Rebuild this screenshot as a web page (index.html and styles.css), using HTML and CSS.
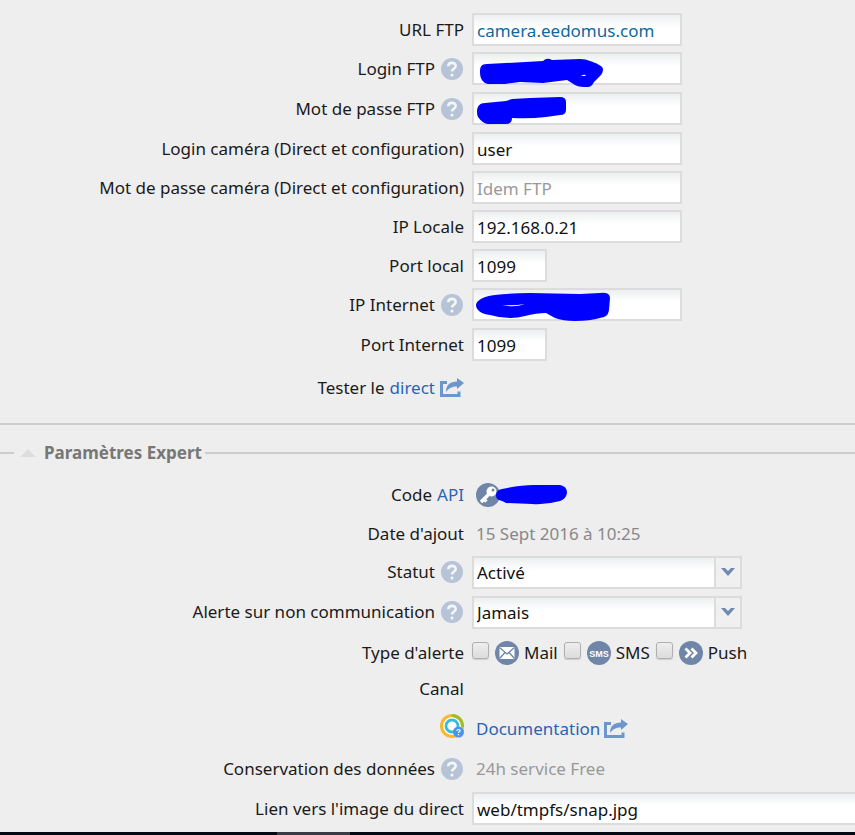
FILE: index.html
```html
<!DOCTYPE html>
<html lang="fr">
<head>
  <meta charset="UTF-8">
  <meta name="viewport" content="width=device-width, initial-scale=1.0">
  <title>Configuration caméra</title>
  <link rel="stylesheet" href="styles.css">
</head>
<body>
  <!-- Icônes partagées -->
  <svg class="sprite" aria-hidden="true">
    <symbol id="icon-help" viewBox="0 0 24 24">
      <circle cx="12" cy="12" r="11" fill="#b7c3d6"/>
      <path d="M8.300 9.300C8.300 4.800 15.700 4.800 15.700 9C15.700 11.800 12 11.700 12 14.500" fill="none" stroke="#f4f6f9" stroke-width="2.600"/>
      <circle cx="12" cy="18" r="1.600" fill="#f4f6f9"/>
    </symbol>
    <symbol id="icon-share" viewBox="0 0 24 20">
      <path d="M7 4.500H1.500V17.500H19V13.500" fill="none" stroke="#6d97cb" stroke-width="3"/>
      <path d="M6 14C6 7 10 3.500 17 3.500V0L24 5L17 11V8.500C12 8.500 9 10 6 14Z" fill="#6d97cb"/>
    </symbol>
    <symbol id="icon-arrow" viewBox="0 0 14 8">
      <path d="M0 0H4L7 3L10 0H14L7 8Z" fill="#6f89ae"/>
    </symbol>
  </svg>

  <form class="page">
    <section class="reseau">
      <div class="row">
        <label for="urlFtp">URL FTP</label>
        <div class="value"><input class="champ url" type="text" id="urlFtp" value="camera.eedomus.com"></div>
      </div>
      <div class="row aide">
        <label for="loginFtp">Login FTP <svg class="help"><use href="#icon-help"/></svg></label>
        <div class="value">
          <input class="champ" type="text" id="loginFtp">
          <svg class="masque" width="140" height="40" viewBox="0 0 140 40">
            <path d="M8 20C8 15 9 12 15 12L71 9Q75 5 80 8L108 7Q114 7 118 9C124 11 131 14 131 17C131 20 130 22 128 24L122 30C120 34 118 35 116 35C111 35 107 35 103 33L95 28L71 31L48 30L33 32H16C11 31 8 27 8 20Z" fill="#0000ff"/>
            <path d="M109 24Q112 22 114 23L113 24Z" fill="#fff"/>
          </svg>
        </div>
      </div>
      <div class="row aide">
        <label for="passeFtp">Mot de passe FTP <svg class="help"><use href="#icon-help"/></svg></label>
        <div class="value">
          <input class="champ" type="password" id="passeFtp">
          <svg class="masque" width="140" height="40" viewBox="0 0 140 40">
            <path d="M5 20C5 14 8 11 13 11L34 9L40 7L58 6L88 5Q94 5 94 10V18Q94 23 88 23L74 25Q58 27 40 26Q40 32 34 32H16Q11 32 6 25Q5 23 5 20Z" fill="#0000ff"/>
          </svg>
        </div>
      </div>
      <div class="row">
        <label for="loginCam">Login caméra (Direct et configuration)</label>
        <div class="value"><input class="champ" type="text" id="loginCam" value="user"></div>
      </div>
      <div class="row">
        <label for="passeCam">Mot de passe caméra (Direct et configuration)</label>
        <div class="value"><input class="champ" type="text" id="passeCam" placeholder="Idem FTP"></div>
      </div>
      <div class="row">
        <label for="ipLocale">IP Locale</label>
        <div class="value"><input class="champ" type="text" id="ipLocale" value="192.168.0.21"></div>
      </div>
      <div class="row">
        <label for="portLocal">Port local</label>
        <div class="value"><input class="champ port" type="text" id="portLocal" value="1099"></div>
      </div>
      <div class="row aide">
        <label for="ipInternet">IP Internet <svg class="help"><use href="#icon-help"/></svg></label>
        <div class="value">
          <input class="champ" type="text" id="ipInternet">
          <svg class="masque" width="140" height="40" viewBox="0 0 140 40">
            <path d="M4 17C4 12 13 8 23 7Q40 5 58 5L108 6L128 5Q138 4 138 10L137 22C136 28 133 29 128 30Q118 33 103 33Q91 33 83 30L74 25C68 25 60 26 53 28Q46 30 38 30Q28 30 18 27C9 26 4 22 4 17Z" fill="#0000ff"/>
            <path d="M30 17Q42 18 53 16Q42 20 30 17Z" fill="#fff"/>
          </svg>
        </div>
      </div>
      <div class="row">
        <label for="portInternet">Port Internet</label>
        <div class="value"><input class="champ port" type="text" id="portInternet" value="1099"></div>
      </div>
      <div class="row test">
        <div class="label">Tester le <a href="#direct">direct</a> <svg class="share"><use href="#icon-share"/></svg></div>
      </div>
    </section>

    <section class="expert">
      <h2 class="titre"><span class="triangle"></span>Paramètres Expert</h2>

      <div class="row">
        <div class="label">Code <a href="#api">API</a></div>
        <div class="value info">
          <svg class="rond" viewBox="0 0 24 24">
            <circle cx="12" cy="12" r="12" fill="#6f86a8"/>
            <circle cx="15.500" cy="8.500" r="5" fill="#fff"/>
            <path d="M12.500 11.500L5 19M8 16L10.500 18.500" stroke="#fff" stroke-width="3.400" fill="none"/>
            <circle cx="17" cy="7" r="1.500" fill="#6f86a8"/>
          </svg>
          <svg class="masque code" width="76" height="24" viewBox="0 0 76 24">
            <path d="M2 12Q2 7 8 6Q26 2 40 2H66Q73 3 73 10Q72 16 66 18Q52 22 38 21L12 20Q9 18 5 17Q2 16 2 12Z" fill="#0000ff"/>
          </svg>
        </div>
      </div>
      <div class="row">
        <div class="label">Date d'ajout</div>
        <div class="value info date">15 Sept 2016 à 10:25</div>
      </div>
      <div class="row liste">
        <label for="statut">Statut <svg class="help"><use href="#icon-help"/></svg></label>
        <div class="value">
          <div class="combo">
            <select id="statut"><option>Activé</option><option>Désactivé</option></select>
            <span class="fleche"><svg><use href="#icon-arrow"/></svg></span>
          </div>
        </div>
      </div>
      <div class="row liste">
        <label for="alerte">Alerte sur non communication <svg class="help"><use href="#icon-help"/></svg></label>
        <div class="value">
          <div class="combo">
            <select id="alerte"><option>Jamais</option></select>
            <span class="fleche"><svg><use href="#icon-arrow"/></svg></span>
          </div>
        </div>
      </div>
      <div class="row types">
        <div class="label">Type d'alerte</div>
        <div class="value">
          <input type="checkbox" id="mail">
          <label class="choix" for="mail">
            <svg class="rond" viewBox="0 0 24 24">
              <circle cx="12" cy="12" r="12" fill="#6f86a8"/>
              <rect x="4.500" y="6" width="15" height="12" fill="#fff"/>
              <path d="M4.500 6.500L12 13L19.500 6.500M4.500 17.500L10 11.500M19.500 17.500L14 11.500" stroke="#6f86a8" stroke-width="1.300" fill="none"/>
            </svg>
            Mail
          </label>
          <input type="checkbox" id="sms">
          <label class="choix" for="sms">
            <svg class="rond" viewBox="0 0 24 24">
              <circle cx="12" cy="12" r="12" fill="#6f86a8"/>
              <text class="sms" x="12" y="16" text-anchor="middle">SMS</text>
            </svg>
            SMS
          </label>
          <input type="checkbox" id="push">
          <label class="choix" for="push">
            <svg class="rond" viewBox="0 0 24 24">
              <circle cx="12" cy="12" r="12" fill="#6f86a8"/>
              <path d="M6.500 7.500L11 12L6.500 16.500M12.500 7.500L17 12L12.500 16.500" stroke="#fff" stroke-width="2.800" fill="none"/>
            </svg>
            Push
          </label>
        </div>
      </div>
      <div class="row canal">
        <div class="label">Canal</div>
      </div>
      <div class="row doc">
        <div class="label">
          <svg class="rond" viewBox="0 0 24 24">
            <circle cx="12" cy="12" r="10.500" fill="#fff" stroke="#fbb82a" stroke-width="3"/>
            <path d="M12 1.500A10.500 10.500 0 0 1 22.500 13" fill="none" stroke="#9bbf2b" stroke-width="3"/>
            <circle cx="12" cy="12" r="6" fill="#fff" stroke="#35bcd8" stroke-width="2.800"/>
            <circle cx="18.500" cy="18" r="5.500" fill="#4a94f0"/>
            <path d="M17 17Q17 15.500 18.500 15.500Q20.500 15.500 20 17Q18.500 18 18.500 19M18.500 20V21.300" fill="none" stroke="#fff" stroke-width="1.200"/>
          </svg>
        </div>
        <div class="value info"><a href="#documentation">Documentation</a> <svg class="share"><use href="#icon-share"/></svg></div>
      </div>
      <div class="row conservation">
        <div class="label">Conservation des données <svg class="help"><use href="#icon-help"/></svg></div>
        <div class="value info gris">24h service Free</div>
      </div>
      <div class="row">
        <label for="lien">Lien vers l'image du direct</label>
        <div class="value"><input class="champ large" type="text" id="lien" value="web/tmpfs/snap.jpg"></div>
      </div>
    </section>
  </form>

  <footer class="barre"><span></span></footer>
</body>
</html>
```
FILE: styles.css
```css
:root {
  --fond: #eeeeee;
  --bord: #dcdcdc;
  --lien: #2a64b4;
}

* {
  box-sizing: border-box;
}

body {
  display: flex;
  flex-direction: column;
  min-height: 100vh;
  margin: 0;
  overflow-x: hidden;
  background-color: var(--fond);
  color: #1a1a1a;
  font-family: "Noto Sans", "DejaVu Sans Condensed", sans-serif;
  font-size: 17px;
  line-height: 24px;
}

a {
  color: var(--lien);
  text-decoration: none;
}

svg {
  flex: none;
}

.sprite {
  position: absolute;
  width: 0;
  height: 0;
}

.page {
  flex: 1;
}

.reseau {
  padding-top: 10px;
  border-bottom: 2px solid #cccccc;
}

.row {
  display: grid;
  grid-template-columns: 464px 1fr;
  column-gap: 8px;
  align-items: center;
  height: 39px;
}

.row > label,
.label {
  display: flex;
  justify-content: flex-end;
  align-items: center;
  gap: 5px;
  white-space: nowrap;
}

.value {
  display: flex;
  align-items: center;
  position: relative;
}

.aide {
  height: 40px;
  padding-bottom: 1px;
}

.test {
  height: 59px;
  padding-bottom: 12px;
}

.info {
  padding-left: 4px;
  gap: 4px;
}

.date {
  color: #888888;
}

.gris {
  color: #999999;
}

.champ,
.combo select {
  height: 33px;
  margin: 0;
  padding: 2px 3px 0;
  border: 2px solid var(--bord);
  border-radius: 0;
  background: #ffffff linear-gradient(#eceff0, #ffffff 12px);
  color: #111111;
  font: inherit;
}

.champ {
  width: 210px;
}

.champ::placeholder {
  color: #999999;
}

.champ.url {
  color: #10689c;
}

.champ.port {
  width: 75px;
}

.champ.large {
  width: calc(100% + 4px);
  flex: none;
}

.help {
  width: 24px;
  height: 24px;
}

.share {
  width: 24px;
  height: 20px;
}

.rond {
  width: 24px;
  height: 24px;
}

/* traits de masquage au-dessus des champs */
.masque {
  position: absolute;
  left: 0;
  top: 0;
  pointer-events: none;
}

.code {
  left: 22px;
}

.titre {
  display: flex;
  align-items: center;
  height: 24px;
  margin: 16px 0 10px;
  color: #777777;
  font-size: 17px;
}

.titre::before,
.titre::after {
  content: "";
  height: 2px;
  background-color: #cccccc;
}

.titre::before {
  width: 14px;
}

.titre::after {
  flex: 1;
  margin-left: 3px;
}

.triangle {
  margin: 0 8px 0 6px;
  border: 8px solid transparent;
  border-top: none;
  border-bottom-color: #dddddd;
}

.liste {
  height: 40px;
  padding-bottom: 2px;
}

.combo {
  position: relative;
  width: 270px;
}

.combo select {
  display: block;
  width: 100%;
  appearance: none;
}

.fleche {
  position: absolute;
  top: 0;
  right: 0;
  display: flex;
  align-items: center;
  justify-content: center;
  width: 28px;
  height: 33px;
  border: 2px solid var(--bord);
  border-radius: 0 4px 0 0;
  background-color: #f0f0f0;
  pointer-events: none;
}

.fleche svg {
  width: 14px;
  height: 8px;
}

.types .value {
  gap: 6px;
}

.types input {
  appearance: none;
  width: 17px;
  height: 17px;
  margin: 0 0 4px;
  border: 1px solid #b0b0b0;
  border-radius: 3px;
  background: linear-gradient(#eeeeee, #dcdcdc);
  box-shadow: 0 1px 1px #cccccc;
}

.types input:checked {
  background: #6f86a8;
}

.choix {
  display: flex;
  align-items: center;
  gap: 5px;
}

.sms {
  fill: #ffffff;
  font: bold 9px "Liberation Sans", sans-serif;
}

.canal {
  height: 34px;
}

.doc {
  height: 42px;
  padding-bottom: 2px;
}

.doc .info {
  padding-top: 6px;
}

.conservation {
  height: 41px;
}

.barre {
  height: 3px;
  background-color: #030a14;
}

.barre span {
  display: block;
  width: 73px;
  height: 3px;
  margin-left: 277px;
  background-color: #3b3b46;
}
```
